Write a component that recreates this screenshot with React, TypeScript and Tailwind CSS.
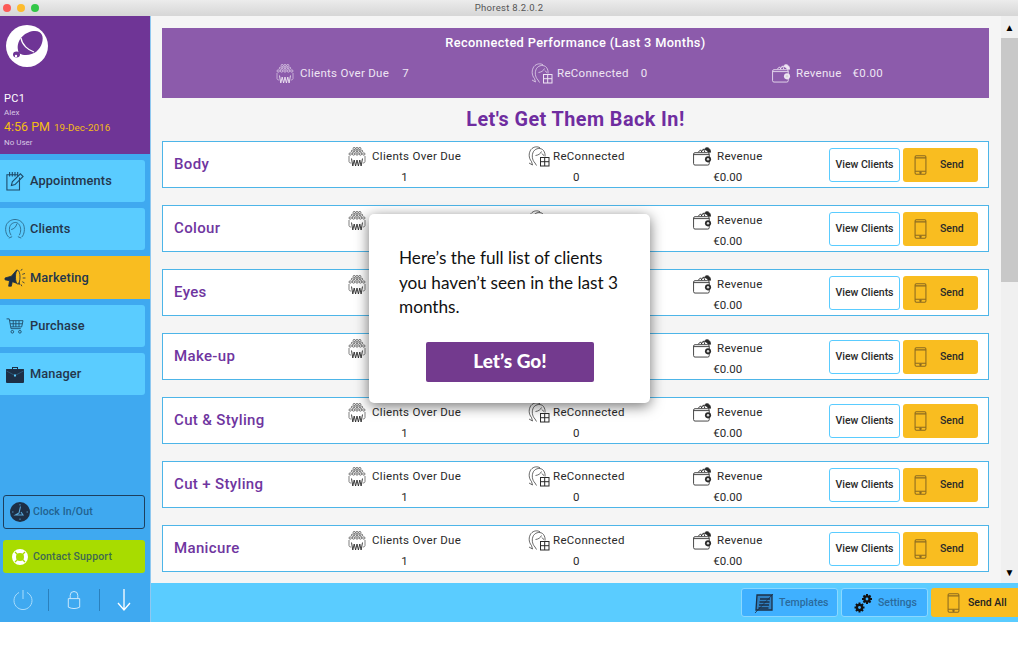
import type { ReactNode } from "react";

const rows = ["Body", "Colour", "Eyes", "Make-up", "Cut & Styling", "Cut + Styling", "Manicure"];

function CrowdIcon({ className }: { className?: string }) {
  return (
    <svg viewBox="0 0 18 20" className={className} fill="none" stroke="currentColor" strokeWidth="0.6">
      <circle cx="6.200" cy="1.500" r="1.100" />
      <circle cx="9" cy="1.500" r="1.100" />
      <circle cx="11.800" cy="1.500" r="1.100" />
      <circle cx="4.400" cy="4.200" r="1.100" />
      <circle cx="7.500" cy="4.200" r="1.100" />
      <circle cx="10.500" cy="4.200" r="1.100" />
      <circle cx="13.600" cy="4.200" r="1.100" />
      <circle cx="2.200" cy="7" r="1.200" />
      <circle cx="5.600" cy="7" r="1.200" />
      <circle cx="9" cy="7" r="1.200" />
      <circle cx="12.400" cy="7" r="1.200" />
      <circle cx="15.800" cy="7" r="1.200" />
      <path d="M1 9v5.500c0 1 1 1.500 2.200 1.500M17 9v5.500c0 1-1 1.500-2.200 1.500" />
      <path d="M3.500 11.500l1.300 7.500 1.400-6 1.400 6 1.400-6 1.400 6 1.400-6 1.300 6 1.400-7.500" strokeWidth="0.900" />
    </svg>
  );
}

function ReconnectIcon({ className }: { className?: string }) {
  return (
    <svg viewBox="0 0 22 21" className={className} fill="none" stroke="currentColor" strokeWidth="0.7">
      <path d="M3.500 15.500C0.500 12 0.500 7 3 3.500 5.500 0.500 9.500 0.200 12 1.800" />
      <path d="M7 17C4 14 3.500 9 5.500 5.500 8 1.800 13 1.500 15.500 4.500c1.300 1.700 1.800 4 1.500 6" />
      <path d="M7.500 9.500c2.500-0.300 5-1.500 6-4M14 7.500c0.500 1 1 1.500 2 2" />
      <path d="M3.500 15.500l1 3.500M1 17l3.500 2M7 17l1.500 2.500" />
      <rect x="12.500" y="11.500" width="8.500" height="8.500" strokeWidth="1" />
      <path d="M16.700 11.500v8.500M12.500 15.700h8.500" strokeWidth="1" />
    </svg>
  );
}

function WalletIcon({ className }: { className?: string }) {
  return (
    <svg viewBox="0 0 20 20" className={className} fill="none" stroke="currentColor" strokeWidth="0.9">
      <rect x="0.600" y="6" width="16.500" height="13" rx="1.500" />
      <path d="M0.600 8h16.500" />
      <path d="M5.500 5.500L8 3l1.500 2.500M8.500 5.500L11 2l1.500 3.500" strokeWidth="1" />
      <path d="M12 2.500c1.500-2.500 4.500-2.500 6 0.500l0.500 2.500h-2.500c-0.500-1.500-2-2.500-4-3z" fill="currentColor" />
      <circle cx="15.800" cy="13" r="3.200" fill="currentColor" stroke="none" />
      <circle cx="15.800" cy="13" r="1.300" fill="#d8d8d8" stroke="none" />
    </svg>
  );
}

function PhoneIcon({ className }: { className?: string }) {
  return (
    <svg viewBox="0 0 13 21" className={className} fill="none" stroke="currentColor" strokeWidth="1.100">
      <rect x="0.800" y="0.800" width="11.400" height="19.400" rx="1.300" />
      <path d="M0.800 3h11.400M0.800 17h11.400" />
      <circle cx="6.500" cy="18.600" r="0.700" fill="currentColor" />
    </svg>
  );
}

function GearIcon({ x, y, scale }: { x: number; y: number; scale: number }) {
  const teeth = [0, 45, 90, 135];
  return (
    <g transform={`translate(${x} ${y}) scale(${scale})`}>
      {teeth.map((deg) => (
        <rect key={deg} x="-1" y="-5" width="2" height="10" fill="#111111" transform={`rotate(${deg})`} />
      ))}
      <circle r="3.700" fill="#111111" />
      <circle r="1.400" fill="#3fb0ff" />
    </g>
  );
}

function NavButton({ label, icon, active }: { label: string; icon: ReactNode; active?: boolean }) {
  return (
    <div
      className={
        active
          ? "flex h-[43px] w-full items-center bg-[#f9bd20] text-[#24364c]"
          : "flex h-[42px] w-[145px] items-center rounded-r-[3px] bg-[#5accff] text-[#24364c]"
      }
    >
      <span className="flex w-[30px] shrink-0 justify-center">{icon}</span>
      <span className="text-[12.800px] font-medium tracking-[0.1px]">{label}</span>
    </div>
  );
}

function Stat({ icon, label, value, gap }: { icon: ReactNode; label: string; value: string; gap: string }) {
  return (
    <div className="inline-flex flex-col items-center pt-[2px] text-[#2a2a2a]">
      <div className={`flex h-[21px] items-center ${gap}`}>
        {icon}
        <span className="text-[11.500px] tracking-[0.3px]">{label}</span>
      </div>
      <span className="mt-[2px] text-[11.500px] leading-[16px]">{value}</span>
    </div>
  );
}

function Row({ name }: { name: string }) {
  return (
    <div className="flex h-[47px] shrink-0 items-center border border-[#4db5e8] bg-white">
      <div className="w-[185px] pl-[11px] text-[15px] font-medium tracking-[0.35px] text-[#6f35a0]">{name}</div>
      <div className="w-[180px]">
        <Stat gap="gap-[6px]" icon={<CrowdIcon className="h-[20px] w-[18px]" />} label="Clients Over Due" value="1" />
      </div>
      <div className="w-[165px]">
        <Stat gap="gap-[3px]" icon={<ReconnectIcon className="h-[21px] w-[22px]" />} label="ReConnected" value="0" />
      </div>
      <div className="w-[136px]">
        <Stat gap="gap-[5px]" icon={<WalletIcon className="h-[19px] w-[19px]" />} label="Revenue" value="€0.00" />
      </div>
      <div className="flex h-[34px] w-[71px] items-center justify-center rounded-[3px] border border-[#5accff] text-[10.500px] font-medium text-[#2a2a2a]">
        View Clients
      </div>
      <div className="ml-[3px] flex h-[34px] w-[75px] items-center rounded-[3px] bg-[#f9bd20] pl-[11px] text-[10.500px] font-medium text-[#2a2a2a]">
        <PhoneIcon className="h-[20px] w-[13px] text-[#8a6a20]" />
        <span className="ml-[13px]">Send</span>
      </div>
    </div>
  );
}

export default function App() {
  return (
    <div className="relative h-[648px] w-[1018px] overflow-hidden bg-white font-['Roboto',sans-serif]">
      <div className="relative flex h-4 items-center justify-center bg-gradient-to-b from-[#ececec] to-[#d6d6d6]">
        <div className="absolute left-[3px] top-[4px] flex gap-[6px]">
          <span className="h-[8px] w-[8px] rounded-full bg-[#fc5b57]" />
          <span className="h-[8px] w-[8px] rounded-full bg-[#fdbc2e]" />
          <span className="h-[8px] w-[8px] rounded-full bg-[#33c748]" />
        </div>
        <span className="text-[9.500px] tracking-[0.3px] text-[#555555]">Phorest 8.2.0.2</span>
      </div>

      <div className="flex h-[606px]">
        <aside className="flex w-[151px] shrink-0 flex-col border-r border-[#8fc8f0] bg-[#3fa9f0]">
          <div className="flex h-[138px] flex-col bg-[#6f3596] px-[4px] text-white">
            <div className="ml-[2px] mt-[9px] flex h-[42px] w-[42px] items-center justify-center rounded-full bg-white">
              <svg viewBox="0 0 42 42" className="h-[42px] w-[42px]">
                <path d="M12 25C10 14 20 6 29 6c7 0 9 6 7 12-2 7-8 12-16 12-5 0-8-2-8-5z" fill="#6f3596" />
                <path d="M15 13c1 7 7 12 13 14" fill="none" stroke="#ffffff" strokeWidth="1.300" />
                <ellipse cx="10.500" cy="29.500" rx="3.500" ry="3" fill="#6f3596" />
                <circle cx="10" cy="31" r="1.200" fill="#ffffff" />
              </svg>
            </div>
            <div className="mt-[25px] text-[11px] leading-[14px] tracking-[0.3px]">PC1</div>
            <div className="mt-[2px] text-[8px] leading-[10px] text-[#d8c8e4]">Alex</div>
            <div className="mt-[1px] flex items-baseline gap-[4px] leading-[16px] text-[#f5bd14]">
              <span className="text-[12.500px]">4:56 PM</span>
              <span className="text-[9.800px] tracking-[0.1px]">19-Dec-2016</span>
            </div>
            <div className="mt-[2px] text-[8px] leading-[10px] text-[#d8c8e4]">No User</div>
          </div>

          <nav className="mt-[6px] flex flex-col gap-[6px]">
            <NavButton
              label="Appointments"
              icon={
                <svg viewBox="0 0 20 22" className="h-[20px] w-[18px]" fill="none" stroke="#1d4a68" strokeWidth="1.200">
                  <path d="M15 7v14H1V4h12" />
                  <path d="M4 1v5M7 1v5M10 1v5M13 1v5" />
                  <path d="M6 16l1-4 9-9 3 3-9 9z" />
                </svg>
              }
            />
            <NavButton
              label="Clients"
              icon={
                <svg viewBox="0 0 22 22" className="h-[21px] w-[22px]" fill="none" stroke="#2a6585" strokeWidth="0.900">
                  <path d="M4.500 19C1 16 0.500 10 2 6 4 2 8 0.500 11 0.500s7 1.500 9 5.500c1.500 4 1 10-2 13" />
                  <path d="M7 17C4.500 14 4.500 8 7 5.500c3-2.500 6-2.500 8 0 2.500 3 2.500 8 0.500 11.500" />
                  <path d="M7 11c3-0.500 5-2.500 6-6M4.500 20l3.500-1.500M17.500 20L14 18.500" />
                </svg>
              }
            />
            <NavButton
              active
              label="Marketing"
              icon={
                <svg viewBox="0 0 24 22" className="h-[20px] w-[24px]" fill="none" stroke="#1d2f45" strokeWidth="0.900">
                  <path d="M1 11l7-2 6-7 3 16-8-3-1 5H5l1-6-5-1z" fill="#1d2f45" />
                  <ellipse cx="15" cy="10" rx="2.500" ry="7.500" fill="#f9bd20" />
                  <path d="M18.500 3l1.500-2M20 7l3-1M20.500 11h3M20 15l2.500 1.500M18.500 18l1 2" />
                </svg>
              }
            />
            <NavButton
              label="Purchase"
              icon={
                <svg viewBox="0 0 20 18" className="h-[16px] w-[18px]" fill="none" stroke="#1d4a68" strokeWidth="1">
                  <path d="M0.500 1h3l2 11h11" />
                  <path d="M4 3h15l-1.500 7H5.500M8 3v7M11 3v7M14.500 3v7M4.500 6.500h14" />
                  <circle cx="7" cy="15.500" r="1.500" />
                  <circle cx="15.500" cy="15.500" r="1.500" />
                </svg>
              }
            />
            <NavButton
              label="Manager"
              icon={
                <svg viewBox="0 0 18 17" className="h-[17px] w-[18px]">
                  <path d="M6 3V1h6v2h5.500a.5.5 0 0 1 .5.500V16a1 1 0 0 1-1 1H1a1 1 0 0 1-1-1V3.500A.5.5 0 0 1 .5 3z" fill="#1d2f45" />
                  <path d="M7 3V2h4v1z" fill="#5accff" />
                  <path d="M0.500 5L9 9.500 17.500 5" fill="none" stroke="#3a7fa8" strokeWidth="0.500" />
                  <rect x="8" y="8.500" width="2" height="2" fill="#5accff" />
                </svg>
              }
            />
          </nav>

          <div className="mt-auto flex flex-col pl-[3px]">
            <div className="flex h-[34px] w-[142px] items-center rounded-[3px] border border-[#1d3f5e] pl-[6px] text-[10.500px] font-medium tracking-[0.1px] text-[#22628f]">
              <svg viewBox="0 0 20 20" className="h-[20px] w-[20px] shrink-0">
                <circle cx="10" cy="10" r="10" fill="#1d2f45" />
                <path d="M10 2v1.500M10 16.500V18M2 10h1.500M16.500 10H18" stroke="#5aa8d8" strokeWidth="0.800" />
                <path d="M10.500 4.500L9 11l-3.500 2h7.500l-2-3" fill="none" stroke="#5aa8d8" strokeWidth="1.100" />
              </svg>
              <span className="ml-[3px]">Clock In/Out</span>
            </div>
            <div className="mt-[11px] flex h-[33px] w-[142px] items-center rounded-[3px] bg-[#a8dc00] pl-[8px] text-[10.500px] font-medium tracking-[0.15px] text-[#3e6a50]">
              <svg viewBox="0 0 18 18" className="h-[18px] w-[18px] shrink-0" fill="none">
                <circle cx="9" cy="9" r="6" stroke="#ffffff" strokeWidth="4" />
                <path d="M4 4l3 3M14 4l-3 3M4 14l3-3M14 14l-3-3" stroke="#a8dc00" strokeWidth="1.300" />
              </svg>
              <span className="ml-[4px]">Contact Support</span>
            </div>
            <div className="mt-[16px] flex h-[22px] items-center">
              <svg viewBox="0 0 20 20" className="ml-[10px] h-[20px] w-[20px]" fill="none" stroke="#a9dcfb" strokeWidth="1">
                <path d="M6 2.500a9 9 0 1 0 8 0M10 0v9" />
              </svg>
              <span className="ml-[15px] h-[22px] w-px bg-[#2a80bd]" />
              <svg viewBox="0 0 14 20" className="ml-[18px] h-[19px] w-[14px]" fill="none" stroke="#cfeafc" strokeWidth="1">
                <path d="M3 8V4.500a4 4 0 0 1 8 0V8" />
                <path d="M1 8h12v9c-4 2-8 2-12 0z" />
              </svg>
              <span className="ml-[18px] h-[22px] w-px bg-[#2a80bd]" />
              <svg viewBox="0 0 14 22" className="ml-[17px] h-[22px] w-[14px]" fill="none" stroke="#ffffff" strokeWidth="1.300">
                <path d="M7 0v21M1 14l6 7 6-7" />
              </svg>
            </div>
            <div className="h-[11px]" />
          </div>
        </aside>

        <div className="flex min-w-0 flex-1 flex-col">
          <div className="flex h-[567px] min-h-0">
            <main className="flex min-w-0 flex-1 flex-col overflow-hidden bg-[#f5f5f5] pl-[11px] pr-[12px] pt-[12px]">
              <section className="flex h-[70px] shrink-0 flex-col bg-[#8c5bab] text-white">
                <div className="mt-[7px] text-center text-[12.800px] font-medium leading-[16px] tracking-[0.35px]">
                  Reconnected Performance (Last 3 Months)
                </div>
                <div className="mt-[12px] flex pl-[114px] text-[11.500px] tracking-[0.3px] text-[#eee5f3]">
                  <div className="flex w-[255px] items-center">
                    <CrowdIcon className="h-[20px] w-[18px]" />
                    <span className="ml-[6px]">Clients Over Due</span>
                    <span className="ml-[13px]">7</span>
                  </div>
                  <div className="flex w-[241px] items-center">
                    <ReconnectIcon className="h-[21px] w-[22px]" />
                    <span className="ml-[4px]">ReConnected</span>
                    <span className="ml-[12px]">0</span>
                  </div>
                  <div className="flex items-center">
                    <WalletIcon className="h-[19px] w-[19px]" />
                    <span className="ml-[5px]">Revenue</span>
                    <span className="ml-[11px]">€0.00</span>
                  </div>
                </div>
              </section>

              <h1 className="flex h-[43px] shrink-0 items-center justify-center pt-[1px] text-[19.800px] font-bold tracking-[0.45px] text-[#6f2da0]">
                Let's Get Them Back In!
              </h1>

              <div className="flex flex-col gap-[17px]">
                {rows.map((name) => (
                  <Row key={name} name={name} />
                ))}
              </div>
            </main>

            <div className="flex w-[17px] shrink-0 flex-col bg-[#f0f0f0]">
              <div className="flex h-[22px] items-center justify-center pt-[2px] text-[10px] leading-none text-black">▲</div>
              <div className="h-[244px] bg-[#c8c8c8]" />
              <div className="mt-auto pb-[5px] text-center text-[10px] leading-none text-black">▼</div>
            </div>
          </div>

          <footer className="flex h-[39px] shrink-0 items-center justify-end bg-[#5accff] text-[10.500px] font-medium">
            <div className="flex h-[29px] w-[97px] items-center rounded-[3px] border border-[#8ad8ff] bg-[#3fb0ff] pl-[12px] text-[#2a6a9c]">
              <svg viewBox="0 0 20 20" className="h-[20px] w-[20px] shrink-0" fill="none" stroke="#1d2f45" strokeWidth="1.300">
                <path d="M3 2h15v15H2z" fill="#2f7fc0" />
                <path d="M6 6h10M5.500 9h10M5 12h10M4.500 15h10" />
                <path d="M1 20L19 1" strokeWidth="0.800" />
              </svg>
              <span className="ml-[5px]">Templates</span>
            </div>
            <div className="ml-[3px] flex h-[29px] w-[87px] items-center rounded-[3px] border border-[#8ad8ff] bg-[#3fb0ff] pl-[12px] text-[#2a6a9c]">
              <svg viewBox="0 0 20 20" className="h-[20px] w-[20px] shrink-0">
                <GearIcon x={13} y={6} scale={1} />
                <GearIcon x={5.500} y={14.500} scale={1} />
              </svg>
              <span className="ml-[4px]">Settings</span>
            </div>
            <div className="ml-[3px] flex h-[29px] w-[87px] items-center rounded-l-[3px] bg-[#f9bd20] pl-[16px] text-[#222222]">
              <PhoneIcon className="h-[20px] w-[13px] text-[#8a6a20]" />
              <span className="ml-[8px]">Send All</span>
            </div>
          </footer>
        </div>
      </div>

      <div className="absolute left-[369px] top-[214px] flex h-[189px] w-[281px] flex-col rounded-[5px] bg-white pl-[30px] pt-[32px] shadow-[0_3px_14px_rgba(0,0,0,0.55)]">
        <p className="w-[230px] font-['Lato',sans-serif] text-[17.200px] leading-[24.500px] text-[#111111]">
          Here’s the full list of clients you haven’t seen in the last 3 months.
        </p>
        <div className="ml-[27px] mt-[22px] flex h-[40px] w-[168px] items-center justify-center rounded-[2px] bg-[#733a8e] font-['Lato',sans-serif] text-[19px] font-black text-white">
          Let’s Go!
        </div>
      </div>
    </div>
  );
}
